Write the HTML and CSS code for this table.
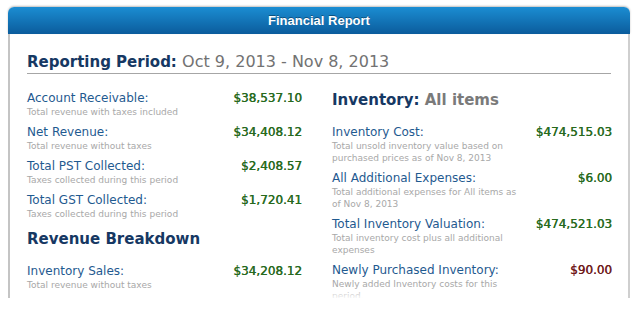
FILE: index.html
```html
<!DOCTYPE html>
<html>
<head>
<meta charset="utf-8">
<link rel="stylesheet" href="styles.css">
</head>
<body>
<div class="panel">
  <div class="panel-head">Financial Report</div>
  <div class="panel-body">
    <h2 class="period"><span class="hl">Reporting Period:</span> <span class="dates">Oct 9, 2013 - Nov 8, 2013</span></h2>
    <div class="cols">
      <div class="col">
        <div class="row">
          <div class="text"><div class="label">Account Receivable:</div><div class="sub">Total revenue with taxes included</div></div>
          <div class="value">$38,537.10</div>
        </div>
        <div class="row">
          <div class="text"><div class="label">Net Revenue:</div><div class="sub">Total revenue without taxes</div></div>
          <div class="value">$34,408.12</div>
        </div>
        <div class="row">
          <div class="text"><div class="label">Total PST Collected:</div><div class="sub">Taxes collected during this period</div></div>
          <div class="value">$2,408.57</div>
        </div>
        <div class="row">
          <div class="text"><div class="label">Total GST Collected:</div><div class="sub">Taxes collected during this period</div></div>
          <div class="value">$1,720.41</div>
        </div>
        <h2 class="section">Revenue Breakdown</h2>
        <div class="row">
          <div class="text"><div class="label">Inventory Sales:</div><div class="sub">Total revenue without taxes</div></div>
          <div class="value">$34,208.12</div>
        </div>
      </div>
      <div class="col">
        <h2 class="section first">Inventory: <span class="muted">All items</span></h2>
        <div class="row">
          <div class="text"><div class="label">Inventory Cost:</div><div class="sub">Total unsold inventory value based on purchased prices as of Nov 8, 2013</div></div>
          <div class="value">$474,515.03</div>
        </div>
        <div class="row">
          <div class="text"><div class="label">All Additional Expenses:</div><div class="sub">Total additional expenses for All items as of Nov 8, 2013</div></div>
          <div class="value">$6.00</div>
        </div>
        <div class="row">
          <div class="text"><div class="label">Total Inventory Valuation:</div><div class="sub">Total inventory cost plus all additional expenses</div></div>
          <div class="value">$474,521.03</div>
        </div>
        <div class="row">
          <div class="text"><div class="label">Newly Purchased Inventory:</div><div class="sub">Newly added Inventory costs for this period.</div></div>
          <div class="value neg">$90.00</div>
        </div>
      </div>
    </div>
  </div>
</div>
</body>
</html>
```

FILE: styles.css
```css
html, body {
  margin: 0;
  padding: 0;
  background: #ffffff;
}

body {
  padding: 7px 0 0 8px;
  font-family: "DejaVu Sans", Verdana, sans-serif;
}

.panel {
  width: 622px;
  position: relative;
}

.panel-head {
  height: 27px;
  box-sizing: border-box;
  border-radius: 6px 6px 0 0;
  background: linear-gradient(#1b8dd2, #0b5c9c);
  color: #ffffff;
  font-family: "Liberation Sans", Arial, sans-serif;
  font-weight: bold;
  font-size: 13px;
  line-height: 27px;
  text-align: center;
  text-shadow: 0 -1px 0 rgba(0, 0, 0, 0.35);
  box-shadow: 0 -1px 2px rgba(0, 0, 0, 0.25);
}

.panel-body {
  height: 264px;
  overflow: hidden;
  border-left: 2px solid #c4c4c4;
  border-right: 2px solid #cfcfcf;
  padding: 19px 17px 0 17px;
  box-sizing: border-box;
  position: relative;
}

.panel-body::after {
  content: "";
  position: absolute;
  left: 0;
  right: 0;
  bottom: 0;
  height: 10px;
  background: linear-gradient(rgba(255, 255, 255, 0), rgba(255, 255, 255, 0.85));
}

h2 {
  margin: 0;
  font-size: 15px;
  line-height: 18px;
  font-weight: bold;
  color: #163863;
}

.period {
  padding-bottom: 2px;
  border-bottom: 1px solid #a6a6a6;
}

.dates {
  font-weight: normal;
  font-size: 16px;
  color: #727272;
}

.cols {
  display: grid;
  grid-template-columns: 275px 280px;
  column-gap: 30px;
  margin-top: 17px;
}

.section {
  margin: 10px 0 16px;
}

.section.first {
  margin-top: 0;
}

.muted {
  color: #7a7a7a;
}

.row {
  display: flex;
  margin-bottom: 7px;
}

.text {
  flex: 0 0 192px;
}

.label {
  font-size: 12px;
  line-height: 15px;
  color: #1f5a90;
}

.sub {
  font-size: 9px;
  line-height: 12px;
  color: #a8a8a8;
}

.value {
  margin-left: auto;
  font-size: 12px;
  line-height: 15px;
  color: #276a1d;
  text-shadow: 0.4px 0 0 #276a1d;
}

.value.neg {
  color: #6f1b1b;
  text-shadow: 0.4px 0 0 #6f1b1b;
}
```
